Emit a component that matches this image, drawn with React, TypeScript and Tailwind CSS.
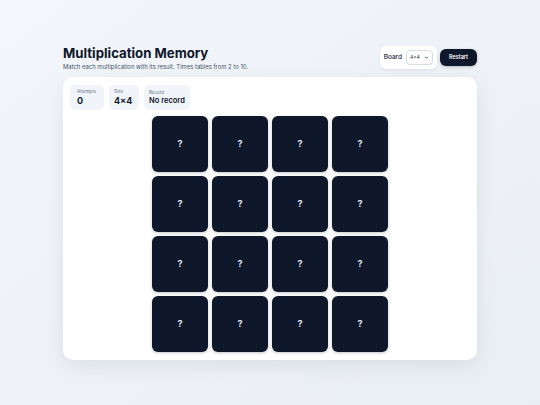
import React from "react";

export default function App() {
  const tiles = Array.from({ length: 16 });
  return (
    <div className="min-h-[405px] w-[540px] bg-gradient-to-br from-[#f3f6fa] to-[#e9eef4] font-['Inter',sans-serif] text-[#0f172a]">
      <div className="px-[63px] pt-[45px]">
        <div className="flex items-start justify-between">
          <div>
            <h1 className="text-[13.2px] font-bold leading-[16px]">Multiplication Memory</h1>
            <p className="mt-[2px] text-[5.9px] leading-[8px] text-[#475569]">
              Match each multiplication with its result. Times tables from 2 to 10.
            </p>
          </div>
          <div className="mt-[1px] flex items-center gap-[3px]">
            <div className="flex h-[23px] items-center gap-[4px] rounded-[6px] bg-white px-[4px] shadow-[0_1px_3px_rgba(15,23,42,0.08)]">
              <span className="text-[6.5px] font-medium text-[#1e293b]">Board</span>
              <div className="flex h-[15px] w-[27px] items-center justify-between rounded-[4px] border border-[#d7dde6] bg-white px-[3px]">
                <span className="text-[5px] text-[#1e293b]">4×4</span>
                <svg width="5" height="5" viewBox="0 0 10 10" fill="none" stroke="#334155" strokeWidth="1.6">
                  <path d="M2 3.5 L5 6.5 L8 3.5" />
                </svg>
              </div>
            </div>
            <button className="flex h-[17px] w-[37px] items-center justify-center rounded-[6px] bg-[#0f172a] text-[5.5px] font-semibold text-white shadow-[0_1px_3px_rgba(15,23,42,0.25)]">
              Restart
            </button>
          </div>
        </div>
        <div className="mt-[6px] h-[283px] rounded-[10px] bg-white px-[7px] pt-[8px] shadow-[0_6px_20px_rgba(15,23,42,0.08)]">
          <div className="flex gap-[5px]">
            <div className="flex h-[25px] w-[34px] flex-col justify-center rounded-[5px] bg-[#f1f5f9] px-[7px]">
              <span className="text-[4.5px] leading-[6px] text-[#64748b]">Attempts</span>
              <span className="text-[9px] font-bold leading-[11px]">0</span>
            </div>
            <div className="flex h-[25px] w-[30px] flex-col justify-center rounded-[5px] bg-[#f1f5f9] px-[5px]">
              <span className="text-[4.5px] leading-[6px] text-[#64748b]">Size</span>
              <span className="text-[9px] font-bold leading-[11px]">4×4</span>
            </div>
            <div className="flex h-[25px] w-[46px] flex-col justify-center rounded-[5px] bg-[#f1f5f9] px-[5px]">
              <span className="text-[4.5px] leading-[6px] text-[#64748b]">Record</span>
              <span className="text-[7.5px] font-semibold leading-[10px]">No record</span>
            </div>
          </div>
          <div className="mt-[6px] flex justify-center">
            <div className="grid grid-cols-4 gap-[4px]">
              {tiles.map((_, i) => (
                <div
                  key={i}
                  className="flex h-[56px] w-[56px] items-center justify-center rounded-[6px] bg-[#0f172a] shadow-[0_1px_3px_rgba(15,23,42,0.25)]"
                >
                  <span className="text-[9px] font-bold text-[#e2e8f0]">?</span>
                </div>
              ))}
            </div>
          </div>
        </div>
      </div>
    </div>
  );
}
